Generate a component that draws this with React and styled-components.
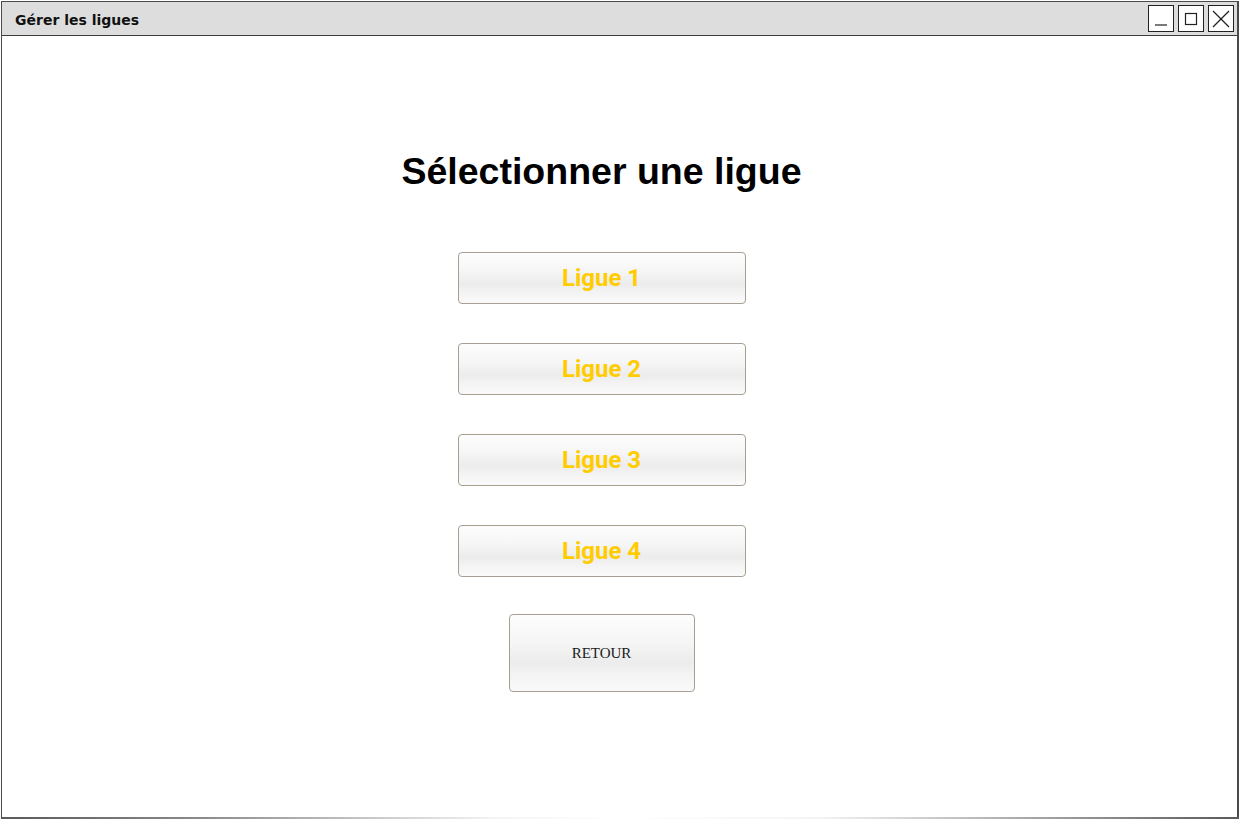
import React from "react";
import styled, { createGlobalStyle } from "styled-components";

const GlobalStyle = createGlobalStyle`
  html, body {
    margin: 0;
    padding: 0;
    background: #ffffff;
  }
  #root {
    padding: 1px;
    width: 1240px;
    height: 820px;
    box-sizing: border-box;
  }
`;

const Window = styled.div`
  position: relative;
  width: 1238px;
  height: 818px;
  box-sizing: border-box;
  border: 1px solid #4a4a4a;
  border-bottom: none;
  border-right-width: 2px;
  display: flex;
  flex-direction: column;
  background: #ffffff;

  &::after {
    content: "";
    position: absolute;
    left: -1px;
    right: -2px;
    bottom: 0;
    height: 2px;
    background: linear-gradient(
      to right,
      #5a5a5a 0%,
      #8a8a8a 16%,
      #f4f4f4 40%,
      #ffffff 50%,
      #f4f4f4 66%,
      #9a9a9a 86%,
      #5a5a5a 100%
    );
  }
`;

const TitleBar = styled.div`
  height: 33px;
  flex: none;
  background: #dddddd;
  border-bottom: 1px solid #3c3c3c;
  display: flex;
  align-items: center;
  justify-content: space-between;
  padding: 0 3px 0 13px;
`;

const TitleText = styled.span`
  font-family: "Comic Sans MS", "DejaVu Sans", sans-serif;
  font-size: 14px;
  font-weight: 600;
  color: #111;
  margin-top: 2px;
`;

const WindowControls = styled.div`
  display: flex;
  gap: 4px;
`;

const ControlBox = styled.div`
  width: 24px;
  height: 25px;
  border: 1px solid #222;
  background: #ffffff;
  display: flex;
  align-items: center;
  justify-content: center;
`;

const Content = styled.main`
  flex: 1;
  display: flex;
  flex-direction: column;
  align-items: center;
  padding: 114px 36px 0 0;
`;

const Heading = styled.h1`
  margin: 0 0 60px;
  font-family: "Liberation Sans", Arial, sans-serif;
  font-size: 37.5px;
  font-weight: bold;
  color: #000;
  line-height: 42px;
`;

const ButtonList = styled.div`
  display: flex;
  flex-direction: column;
  align-items: center;
  gap: 39px;
`;

const GradientButton = styled.button`
  box-sizing: border-box;
  width: ${(p) => p.$w}px;
  height: ${(p) => p.$h}px;
  border: 1px solid #a89f92;
  border-radius: 4px;
  background: linear-gradient(
    to bottom,
    #fdfdfd 0%,
    #f6f6f6 35%,
    #ececec 62%,
    #f4f4f4 80%,
    #fafafa 100%
  );
  cursor: pointer;
  padding: 0;
`;

const LeagueButton = styled(GradientButton)`
  font-family: Roboto, "Liberation Sans", sans-serif;
  font-size: 24px;
  font-weight: bold;
  color: #ffcc00;
`;

const BackButton = styled(GradientButton)`
  margin-top: -2px;
  font-family: "Liberation Serif", "Times New Roman", serif;
  font-size: 15px;
  color: #1a1a1a;
`;

const leagues = ["Ligue 1", "Ligue 2", "Ligue 3", "Ligue 4"];

export default function App() {
  return (
    <>
      <GlobalStyle />
      <Window>
        <TitleBar>
          <TitleText>Gérer les ligues</TitleText>
          <WindowControls>
            <ControlBox>
              <svg width="16" height="16" viewBox="0 0 16 16">
                <line x1="2" y1="14" x2="14" y2="14" stroke="#222" strokeWidth="1.2" />
              </svg>
            </ControlBox>
            <ControlBox>
              <svg width="16" height="16" viewBox="0 0 16 16">
                <rect x="2.5" y="2.5" width="11" height="11" fill="none" stroke="#222" strokeWidth="1.2" />
              </svg>
            </ControlBox>
            <ControlBox>
              <svg width="20" height="20" viewBox="0 0 20 20">
                <line x1="2" y1="2" x2="18" y2="18" stroke="#222" strokeWidth="1.2" />
                <line x1="18" y1="2" x2="2" y2="18" stroke="#222" strokeWidth="1.2" />
              </svg>
            </ControlBox>
          </WindowControls>
        </TitleBar>
        <Content>
          <Heading>Sélectionner une ligue</Heading>
          <ButtonList>
            {leagues.map((name) => (
              <LeagueButton key={name} $w={288} $h={52}>
                {name}
              </LeagueButton>
            ))}
            <BackButton $w={186} $h={78}>RETOUR</BackButton>
          </ButtonList>
        </Content>
      </Window>
    </>
  );
}
